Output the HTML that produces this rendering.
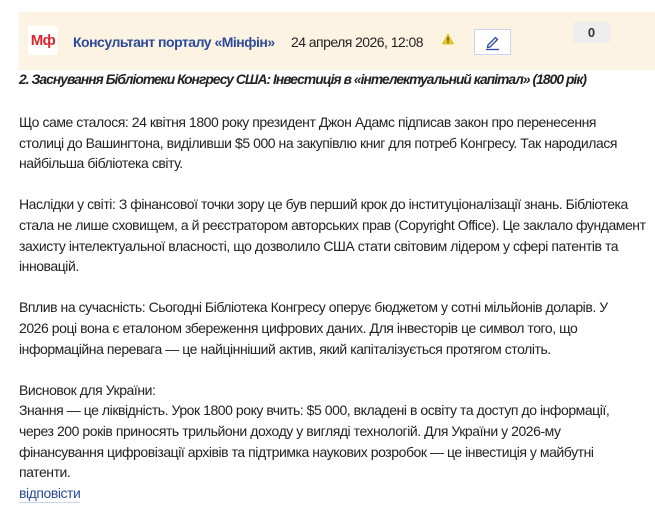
<!DOCTYPE html>
<html><head><meta charset="utf-8"><style>
body{margin:0;width:655px;height:512px;background:#fff;font-family:"Liberation Sans",sans-serif;color:#222;overflow:hidden;position:relative}
.hdr{position:absolute;left:19px;top:12px;width:636px;height:58px;background:#fdf3e3}
.logo{position:absolute;left:28px;top:26px;width:30px;height:29px;background:#fff;border-radius:3px;color:#d8262b;font-weight:bold;font-size:15px;line-height:29px;text-align:center;letter-spacing:-0.5px}
.name{position:absolute;left:73px;top:34px;font-size:14px;font-weight:bold;color:#2b4a9a;white-space:nowrap;letter-spacing:-0.5px}
.date{position:absolute;left:291px;top:34px;font-size:14px;color:#222;white-space:nowrap;letter-spacing:-0.55px}
.edit{position:absolute;left:474px;top:29px;width:35px;height:24px;border:1px solid #c9d3ea;background:#fff}
.cnt{position:absolute;left:573px;top:22px;width:37px;height:21px;background:#eeeeee;font-size:13px;font-weight:bold;text-align:center;line-height:21px;color:#333}
.t{position:absolute;left:19px;white-space:nowrap;font-size:14px;letter-spacing:-0.45px;line-height:20.6px}
.title{top:70px;font-weight:bold;font-style:italic;font-size:13.8px;letter-spacing:-0.95px}
.reply{position:absolute;left:19px;top:484px;font-size:14px;color:#2b4a9a;border-bottom:1px solid #c9d3ea;line-height:18px;letter-spacing:-0.45px}
</style></head><body>
<div class="hdr"></div>
<div class="logo">Мф</div>
<div class="name">Консультант порталу «Мінфін»</div>
<div class="date">24 апреля 2026, 12:08</div>
<svg style="position:absolute;left:441px;top:33px" width="14" height="12" viewBox="0 0 14 13"><path d="M7 1L13 12H1Z" fill="#e8c21f" stroke="#e8c21f" stroke-linejoin="round"/><rect x="6.3" y="4.5" width="1.4" height="4" fill="#333"/><rect x="6.3" y="9.5" width="1.4" height="1.4" fill="#333"/></svg>
<div class="edit"><svg width="35" height="24" viewBox="0 0 35 24"><path d="M13 15L20.5 7.5L22.5 9.5L15 17L12.5 17.5Z" fill="none" stroke="#2b4a9a" stroke-width="1.3"/><line x1="11" y1="19.5" x2="24" y2="19.5" stroke="#2b4a9a" stroke-width="1.3"/></svg></div>
<div class="cnt">0</div>
<div class="t title">2. Заснування Бібліотеки Конгресу США: Інвестиція в «інтелектуальний капітал» (1800 рік)</div>
<div class="t" style="top:112px">Що саме сталося: 24 квітня 1800 року президент Джон Адамс підписав закон про перенесення<br>столиці до Вашингтона, виділивши $5 000 на закупівлю книг для потреб Конгресу. Так народилася<br>найбільша бібліотека світу.<br><br>Наслідки у світі: З фінансової точки зору це був перший крок до інституціоналізації знань. Бібліотека<br>стала не лише сховищем, а й реєстратором авторських прав (Copyright Office). Це заклало фундамент<br>захисту інтелектуальної власності, що дозволило США стати світовим лідером у сфері патентів та<br>інновацій.<br><br>Вплив на сучасність: Сьогодні Бібліотека Конгресу оперує бюджетом у сотні мільйонів доларів. У<br>2026 році вона є еталоном збереження цифрових даних. Для інвесторів це символ того, що<br>інформаційна перевага — це найцінніший актив, який капіталізується протягом століть.<br><br>Висновок для України:<br>Знання — це ліквідність. Урок 1800 року вчить: $5 000, вкладені в освіту та доступ до інформації,<br>через 200 років приносять трильйони доходу у вигляді технологій. Для України у 2026-му<br>фінансування цифровізації архівів та підтримка наукових розробок — це інвестиція у майбутні<br>патенти.</div>
<div class="reply">відповісти</div>
</body></html>
